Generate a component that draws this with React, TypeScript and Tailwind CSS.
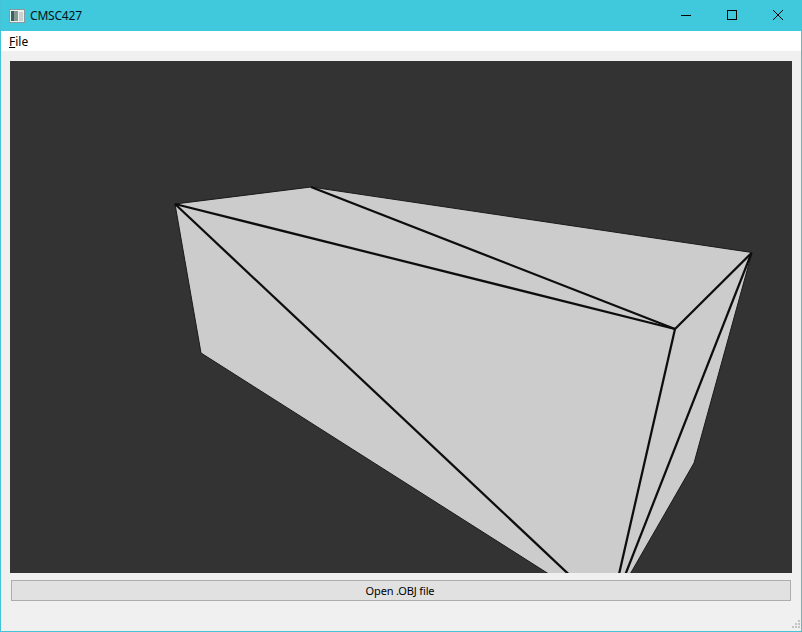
const toCanvas = (points: number[][]) => points.map(([x, y]) => `${x - 10},${y - 61}`).join(" ");

// lower points run past the canvas bottom so the clip cuts them off
const outline = [
  [175, 204],
  [311, 187],
  [752, 252.5],
  [694, 463],
  [625, 583],
  [563, 583],
  [201, 353],
];

const thickEdges = [
  [175, 204, 675, 329],
  [311, 187, 675, 329],
  [175, 204, 578, 583],
  [751.5, 253, 675, 329],
  [675, 329, 617, 583],
  [751.5, 253, 622, 583],
];

export default function App() {
  return (
    <div
      className="flex h-[632px] w-[802px] flex-col overflow-hidden border-x border-b border-[#45c4d8] bg-[#f0f0f0] text-black"
      style={{ fontFamily: '"Noto Sans", "Open Sans", sans-serif' }}
    >
      <div className="-mx-px flex h-[31px] shrink-0 items-center bg-[#40c8dc]">
        <svg width="16" height="14" viewBox="0 0 16 14" className="ml-[9px]">
          <rect x="0.5" y="0.5" width="15" height="13" fill="#eef0f0" stroke="#8b9a9c" />
          <rect x="2" y="2" width="3" height="10" fill="#3f5f66" />
          <rect x="5" y="2" width="4" height="10" fill="#7f9a8e" />
          <rect x="10" y="3" width="4" height="9" fill="#c9d2d2" />
        </svg>
        <span className="ml-[5px] text-[12px] leading-none tracking-[-0.2px] text-[#02131a]">CMSC427</span>
        <div className="ml-auto mr-px flex items-center">
          <svg width="46" height="31" viewBox="0 0 46 31">
            <path d="M18 15.5H28" stroke="#000" strokeWidth="1" />
          </svg>
          <svg width="46" height="31" viewBox="0 0 46 31">
            <rect x="18.5" y="10.5" width="9" height="9" fill="none" stroke="#000" strokeWidth="1" />
          </svg>
          <svg width="46" height="31" viewBox="0 0 46 31">
            <path d="M18 10L28 20M28 10L18 20" stroke="#000" strokeWidth="1" />
          </svg>
        </div>
      </div>

      <div className="flex h-5 shrink-0 items-center bg-white pl-2 pt-0.5 text-[12px] leading-none">
        <span>
          <span className="underline">F</span>ile
        </span>
      </div>

      <div className="flex min-h-0 flex-1 flex-col pl-[9px] pr-[9px] pt-[10px]">
        <div className="h-[512px] w-[782px] shrink-0 overflow-hidden bg-[#333333]">
          <svg width="782" height="512" viewBox="0 0 782 512" className="block">
            <polygon points={toCanvas(outline)} fill="#cccccc" stroke="#1a1a1a" strokeWidth="1" />
            {thickEdges.map(([x1, y1, x2, y2]) => (
              <line
                key={`${x1}-${y1}-${x2}-${y2}`}
                x1={x1 - 10}
                y1={y1 - 61}
                x2={x2 - 10}
                y2={y2 - 61}
                stroke="#0d0d0d"
                strokeWidth="2.25"
              />
            ))}
          </svg>
        </div>
        <button
          type="button"
          className="ml-px mt-[7px] h-[21px] w-[780px] shrink-0 border border-[#adadad] bg-[#e1e1e1] pr-0.5 text-[11px] leading-none tracking-[-0.15px] text-black"
        >
          Open .OBJ file
        </button>
      </div>

      <div className="relative h-0">
        <svg width="12" height="12" viewBox="0 0 12 12" className="absolute bottom-0 right-0">
          <g fill="#c4c4c4">
            <rect x="9" y="1" width="2" height="2" />
            <rect x="6" y="4" width="2" height="2" />
            <rect x="9" y="4" width="2" height="2" />
            <rect x="3" y="7" width="2" height="2" />
            <rect x="6" y="7" width="2" height="2" />
            <rect x="9" y="7" width="2" height="2" />
          </g>
        </svg>
      </div>
    </div>
  );
}
